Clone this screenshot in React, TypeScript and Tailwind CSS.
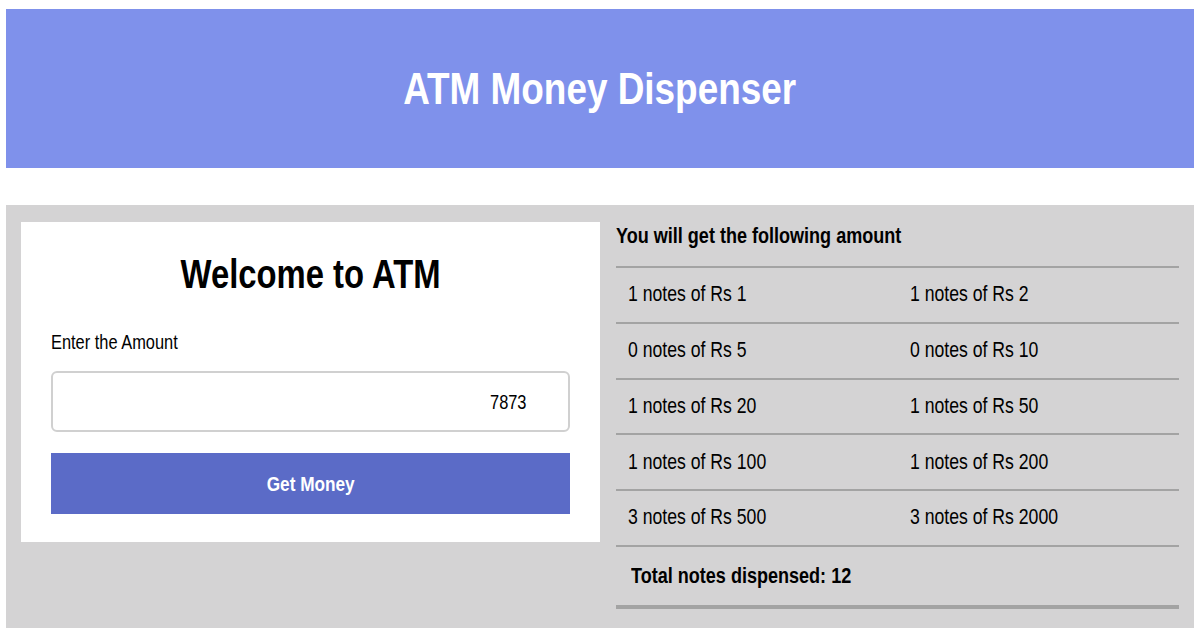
import type { ReactNode } from 'react';

const notes = [
  { count: 1, value: 1 },
  { count: 1, value: 2 },
  { count: 0, value: 5 },
  { count: 0, value: 10 },
  { count: 1, value: 20 },
  { count: 1, value: 50 },
  { count: 1, value: 100 },
  { count: 1, value: 200 },
  { count: 3, value: 500 },
  { count: 3, value: 2000 },
];

const font = { fontFamily: '"Liberation Sans", Arial, sans-serif' };

// condensed look of the original font (no narrow face installed)
function Narrow({ children, center = false }: { children: ReactNode; center?: boolean }) {
  return (
    <span className={`inline-block whitespace-nowrap scale-x-[0.82] ${center ? 'origin-center' : 'origin-left'}`}>
      {children}
    </span>
  );
}

export default function App() {
  const rows: (typeof notes)[] = [];
  for (let i = 0; i < notes.length; i += 2) rows.push(notes.slice(i, i + 2));
  const total = notes.reduce((s, n) => s + n.count, 0);

  return (
    <div className="h-[628px] overflow-hidden bg-white text-black" style={font}>
      {/* Header */}
      <div className="mx-[6px] mt-[9px] flex h-[159px] items-center justify-center bg-[#7f91eb]">
        <h1 className="text-[45px] font-bold leading-none text-white">
          <Narrow center>ATM Money Dispenser</Narrow>
        </h1>
      </div>

      <div className="mx-[6px] mt-[37px] flex h-[500px] gap-[16px] bg-[#d4d3d4] px-[15px] pt-[17px]">
        {/* Left card */}
        <div className="flex h-[320px] w-[579px] shrink-0 flex-col bg-white px-[30px]">
          <h2 className="mt-[32px] text-center text-[40px] font-bold leading-none">
            <Narrow center>Welcome to ATM</Narrow>
          </h2>
          <label className="mt-[38px] text-[20px] leading-none">
            <Narrow>Enter the Amount</Narrow>
          </label>
          <div className="mt-[19px] flex h-[61px] w-full items-center justify-end rounded-[6px] border-2 border-[#d0d0d0] bg-white pr-[42px] text-[20px] leading-none">
            <span className="inline-block scale-x-[0.82] origin-right">7873</span>
          </div>
          <button className="mt-[21px] h-[61px] w-full bg-[#5b6bc7] text-[21px] font-bold leading-none text-white" style={font}>
            <Narrow center>Get Money</Narrow>
          </button>
        </div>

        {/* Right result */}
        <div className="flex-1">
          <p className="pt-[3px] text-[22px] font-bold leading-none">
            <Narrow>You will get the following amount</Narrow>
          </p>
          <div className="mt-[19px] border-t-2 border-[#a3a3a3]">
            {rows.map((row, i) => (
              <div key={i} className="grid h-[55.8px] grid-cols-2 items-center border-b-2 border-[#a3a3a3]">
                {row.map((n) => (
                  <span key={n.value} className="px-[12px] text-[21.5px] leading-none">
                    <Narrow>
                      {n.count} notes of Rs {n.value}
                    </Narrow>
                  </span>
                ))}
              </div>
            ))}
            <div className="flex h-[62px] items-center border-b-[4px] border-[#a3a3a3] px-[15px]">
              <span className="text-[22px] font-bold leading-none">
                <Narrow>Total notes dispensed: {total}</Narrow>
              </span>
            </div>
          </div>
        </div>
      </div>
    </div>
  );
}
